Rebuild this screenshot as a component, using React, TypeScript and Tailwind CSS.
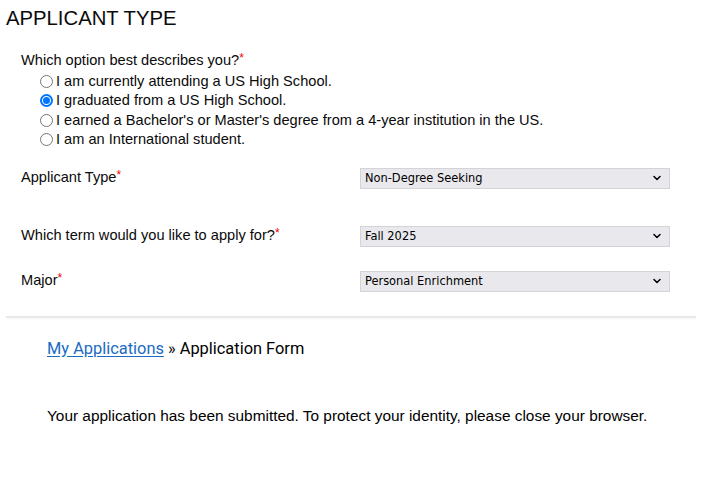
import { ChevronDown } from 'lucide-react';

const options = [
  { label: 'I am currently attending a US High School.', checked: false },
  { label: 'I graduated from a US High School.', checked: true },
  { label: "I earned a Bachelor's or Master's degree from a 4-year institution in the US.", checked: false },
  { label: 'I am an International student.', checked: false },
];

function Radio({ checked }: { checked: boolean }) {
  return checked ? (
    <span className="w-[13px] h-[13px] rounded-full border-[2px] border-[#0075ff] flex items-center justify-center shrink-0">
      <span className="w-[7px] h-[7px] rounded-full bg-[#0075ff]" />
    </span>
  ) : (
    <span className="w-[13px] h-[13px] rounded-full border border-[#767676] shrink-0" />
  );
}

function Select({ value }: { value: string }) {
  return (
    <div className="w-[310px] h-[21px] bg-[#e9e9ed] border border-[#d4d4d8] flex items-center justify-between pl-[4px] pr-[6px] text-[12.7px] text-black font-stretch-condensed" style={{ fontFamily: 'Tahoma, "DejaVu Sans", sans-serif' }}>
      <span>{value}</span>
      <ChevronDown className="w-[12px] h-[12px]" strokeWidth={3} />
    </div>
  );
}

function Field({ label, value }: { label: string; value: string }) {
  return (
    <div className="flex items-center h-[21px]">
      <div className="w-[339px] text-[14.6px] leading-[21px]">
        {label}
        <span className="text-[#e00] text-[12px] relative -top-[3px]">*</span>
      </div>
      <Select value={value} />
    </div>
  );
}

export default function App() {
  return (
    <div className="w-[725px] h-[488px] bg-white text-[#0a0a0a] overflow-hidden" style={{ fontFamily: '"Liberation Sans", Arial, sans-serif' }}>
      <h1 className="pl-[6px] pt-[6px] text-[20.3px] leading-[24px]">APPLICANT TYPE</h1>

      <div className="pl-[21px] mt-[21px] text-[14.6px] leading-[19.5px]">
        <div>
          Which option best describes you?
          <span className="text-[#e00] text-[12px] relative -top-[3px]">*</span>
        </div>
        <div className="pl-[19px]">
          {options.map((o) => (
            <div key={o.label} className="flex items-center gap-[3px]">
              <Radio checked={o.checked} />
              <span>{o.label}</span>
            </div>
          ))}
        </div>
      </div>

      <div className="pl-[21px] mt-[18px] flex flex-col">
        <Field label="Applicant Type" value="Non-Degree Seeking" />
        <div className="mt-[37px]">
          <Field label="Which term would you like to apply for?" value="Fall 2025" />
        </div>
        <div className="mt-[24px]">
          <Field label="Major" value="Personal Enrichment" />
        </div>
      </div>

      <div className="ml-[6px] w-[690px] mt-[24px] border-t-2 border-[#e8e8e8] shadow-[0_1px_2px_rgba(0,0,0,0.04)]" />

      <div className="pl-[47px] text-black">
        <div className="mt-[21px] leading-[20px] text-[16.4px]" style={{ fontFamily: 'Roboto, "Liberation Sans", sans-serif' }}>
          <a href="#" className="text-[#1a6bc4] underline underline-offset-2">My Applications</a>
          <span> » Application Form</span>
        </div>
        <p className="mt-[47px] leading-[20px] text-[15.4px]">
          Your application has been submitted. To protect your identity, please close your browser.
        </p>
      </div>
    </div>
  );
}
